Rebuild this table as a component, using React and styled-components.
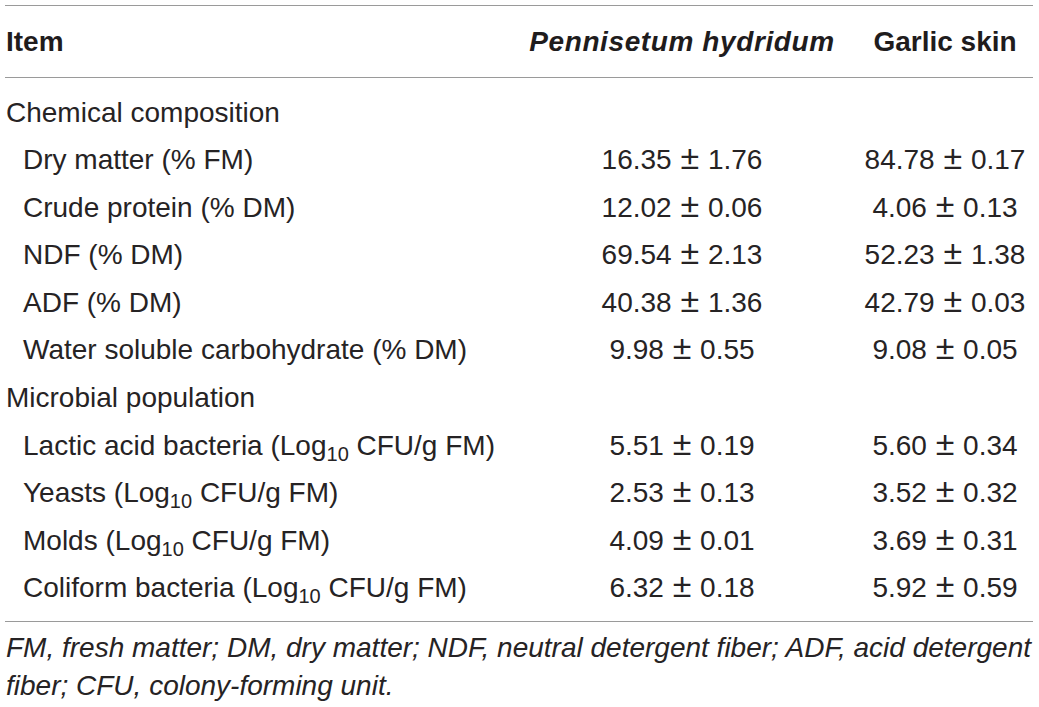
import React from "react";
import styled, { createGlobalStyle } from "styled-components";

const GlobalStyle = createGlobalStyle`
  body {
    margin: 0;
    background: #ffffff;
    font-family: "Liberation Sans", Arial, Helvetica, sans-serif;
    color: #262324;
  }
`;

const Page = styled.div`
  padding: 5px 6px 0 5px;
  width: 1028px;
`;

const Table = styled.div`
  border-top: 1px solid #9a9a9a;
  border-bottom: 1px solid #9a9a9a;
`;

const Grid = styled.div`
  display: grid;
  grid-template-columns: 502px 350px 176px;
  align-items: center;
`;

const HeaderRow = styled(Grid)`
  height: 71px;
  border-bottom: 1px solid #9a9a9a;
  font-size: 28px;
  font-weight: 700;
  color: #1f1c1d;
`;

const HeadCell = styled.div`
  text-align: ${(p) => (p.$center ? "center" : "left")};
  font-style: ${(p) => (p.$italic ? "italic" : "normal")};
  letter-spacing: ${(p) => (p.$italic ? "0.6px" : "0")};
  padding-left: ${(p) => (p.$center ? "0" : "1px")};
`;

const Body = styled.div`
  padding: 10.5px 0 8.5px;
`;

const Row = styled(Grid)`
  height: 47.6px;
  line-height: 47.6px;
  font-size: 28px;
  white-space: nowrap;
`;

const Label = styled.div`
  padding-left: ${(p) => (p.$indent ? "18px" : "1px")};
`;

const Value = styled.div`
  text-align: center;
`;

const PlusMinus = styled.span`
  font-size: 34px;
  line-height: 0;
  font-weight: 300;
  margin: 0 1px;
`;

const Sub = styled.sub`
  font-size: 20px;
  line-height: 0;
  vertical-align: -6px;
`;

const Footnote = styled.p`
  margin: 0;
  padding: 7.5px 0 0 1px;
  font-size: 28px;
  line-height: 38px;
  font-style: italic;
`;

const Log = () => (
  <>
    Log<Sub>10</Sub> CFU/g FM
  </>
);

const Stat = ({ value }) => {
  const [mean, sd] = value.split(" ± ");
  return (
    <Value>
      {mean} <PlusMinus>±</PlusMinus> {sd}
    </Value>
  );
};

const sections = [
  {
    title: "Chemical composition",
    rows: [
      ["Dry matter (% FM)", "16.35 ± 1.76", "84.78 ± 0.17"],
      ["Crude protein (% DM)", "12.02 ± 0.06", "4.06 ± 0.13"],
      ["NDF (% DM)", "69.54 ± 2.13", "52.23 ± 1.38"],
      ["ADF (% DM)", "40.38 ± 1.36", "42.79 ± 0.03"],
      ["Water soluble carbohydrate (% DM)", "9.98 ± 0.55", "9.08 ± 0.05"],
    ],
  },
  {
    title: "Microbial population",
    rows: [
      ["Lactic acid bacteria", "5.51 ± 0.19", "5.60 ± 0.34", true],
      ["Yeasts", "2.53 ± 0.13", "3.52 ± 0.32", true],
      ["Molds", "4.09 ± 0.01", "3.69 ± 0.31", true],
      ["Coliform bacteria", "6.32 ± 0.18", "5.92 ± 0.59", true],
    ],
  },
];

export default function App() {
  return (
    <Page>
      <GlobalStyle />
      <Table>
        <HeaderRow>
          <HeadCell>Item</HeadCell>
          <HeadCell $center $italic>Pennisetum hydridum</HeadCell>
          <HeadCell $center>Garlic skin</HeadCell>
        </HeaderRow>
        <Body>
          {sections.map((s) => (
            <React.Fragment key={s.title}>
              <Row>
                <Label>{s.title}</Label>
                <Value />
                <Value />
              </Row>
              {s.rows.map(([label, a, b, log]) => (
                <Row key={label}>
                  <Label $indent>
                    {log ? (
                      <>
                        {label} (<Log />)
                      </>
                    ) : (
                      label
                    )}
                  </Label>
                  <Stat value={a} />
                  <Stat value={b} />
                </Row>
              ))}
            </React.Fragment>
          ))}
        </Body>
      </Table>
      <Footnote>
        FM, fresh matter; DM, dry matter; NDF, neutral detergent fiber; ADF, acid detergent fiber; CFU,
        colony-forming unit.
      </Footnote>
    </Page>
  );
}
